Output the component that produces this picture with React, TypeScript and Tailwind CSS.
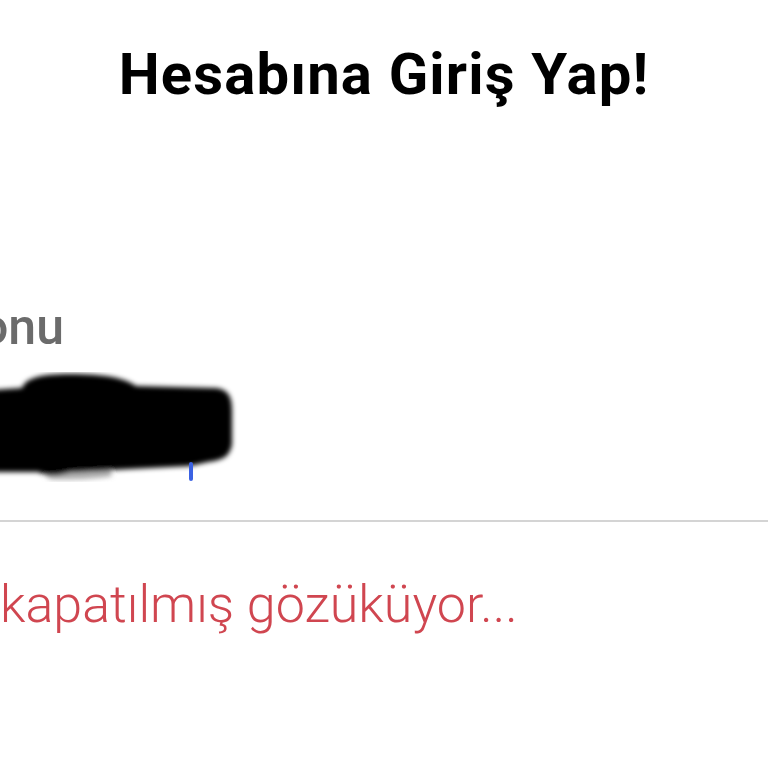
import type { ReactNode } from 'react'

function Redaction() {
  // hand-drawn marker scribble hiding the typed value
  return (
    <svg width="240" height="110" viewBox="0 0 240 110" className="block">
      <defs>
        <filter id="soft" x="-10%" y="-10%" width="120%" height="120%">
          <feGaussianBlur stdDeviation="2.4" />
        </filter>
      </defs>
      <g filter="url(#soft)">
        <path
          fill="#8a8a8a"
          opacity="0.7"
          d="M46 96 L110 94 L112 104 C90 108 60 108 50 107 C44 104 44 100 46 96 Z"
        />
        <path
          fill="#050505"
          d="M-10 18 L22 16 C26 6 40 2 70 2 C105 2 125 6 136 14 L212 16 C228 16 232 24 232 38 L232 72 C230 84 224 88 208 90 L190 94 L70 100 C56 104 46 104 38 100 L-10 100 Z"
        />
      </g>
    </svg>
  )
}

function Field({ label, children }: { label: string; children: ReactNode }) {
  return (
    <div className="flex flex-col">
      <div className="flex w-[64px] justify-end">
        <span className="whitespace-nowrap text-[50px] font-medium leading-none text-[#6b6b6b]">
          {label}
        </span>
      </div>
      {children}
    </div>
  )
}

export default function App() {
  return (
    <div
      className="relative h-[768px] w-[768px] overflow-hidden bg-white"
      style={{ fontFamily: 'Roboto, "Noto Sans", sans-serif' }}
    >
      <h1 className="pt-[45px] text-center text-[58px] font-bold leading-none tracking-[0.02em] text-black">
        Hesabına Giriş Yap!
      </h1>

      <div className="mt-[199px]">
        <Field label="Konu">
          <div className="relative mt-[20px] h-[110px]">
            <Redaction />
            <span className="absolute left-[189px] top-[90px] h-[19px] w-[4px] rounded-full bg-[#3b62e3]" />
          </div>
        </Field>
      </div>

      <div className="mt-[38px] h-[2px] w-full bg-[#d4d4d4]" />

      <p className="mt-[57px] whitespace-nowrap text-[52px] font-light leading-none text-[#d04650]">
        kapatılmış gözüküyor...
      </p>
    </div>
  )
}
